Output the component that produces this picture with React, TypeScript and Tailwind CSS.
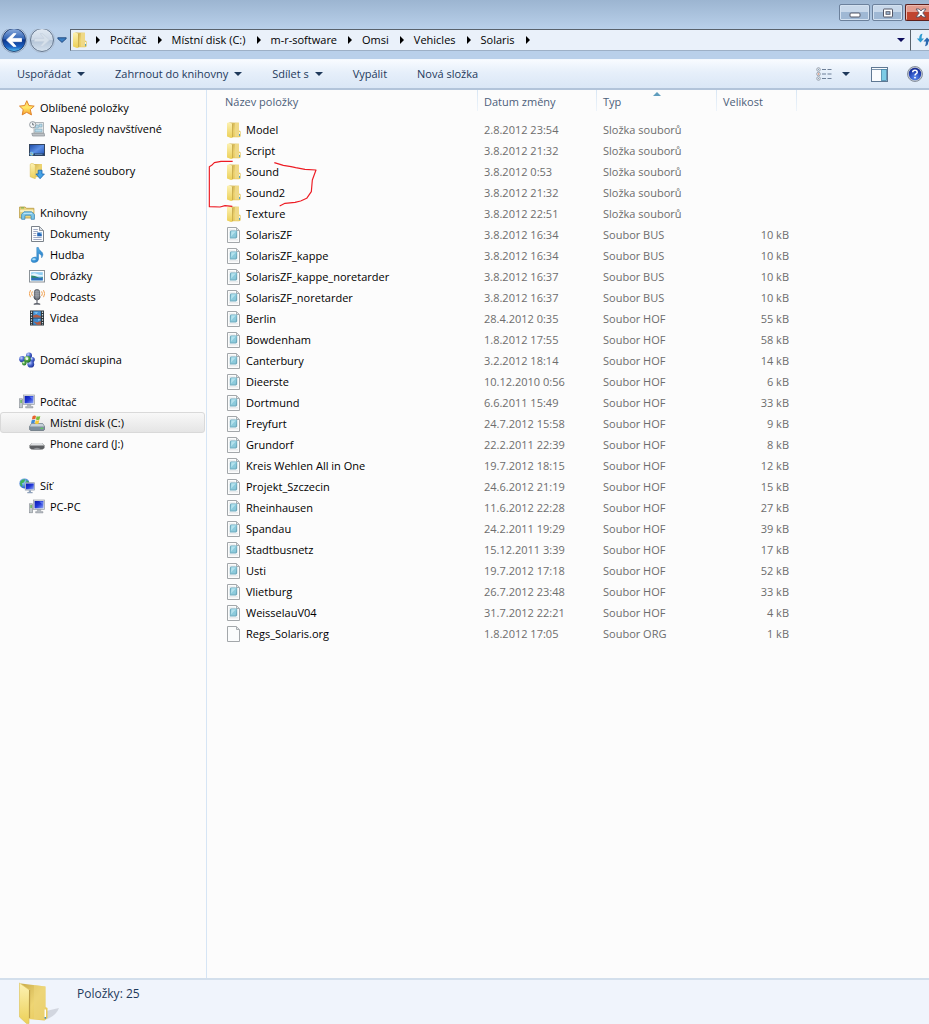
import type { ReactNode } from "react";

type FileRow = {
  name: string;
  date: string;
  type: string;
  size?: string;
};

const files: FileRow[] = [
  { name: "Model", date: "2.8.2012 23:54", type: "Složka souborů" },
  { name: "Script", date: "3.8.2012 21:32", type: "Složka souborů" },
  { name: "Sound", date: "3.8.2012 0:53", type: "Složka souborů" },
  { name: "Sound2", date: "3.8.2012 21:32", type: "Složka souborů" },
  { name: "Texture", date: "3.8.2012 22:51", type: "Složka souborů" },
  { name: "SolarisZF", date: "3.8.2012 16:34", type: "Soubor BUS", size: "10 kB" },
  { name: "SolarisZF_kappe", date: "3.8.2012 16:34", type: "Soubor BUS", size: "10 kB" },
  { name: "SolarisZF_kappe_noretarder", date: "3.8.2012 16:37", type: "Soubor BUS", size: "10 kB" },
  { name: "SolarisZF_noretarder", date: "3.8.2012 16:37", type: "Soubor BUS", size: "10 kB" },
  { name: "Berlin", date: "28.4.2012 0:35", type: "Soubor HOF", size: "55 kB" },
  { name: "Bowdenham", date: "1.8.2012 17:55", type: "Soubor HOF", size: "58 kB" },
  { name: "Canterbury", date: "3.2.2012 18:14", type: "Soubor HOF", size: "14 kB" },
  { name: "Dieerste", date: "10.12.2010 0:56", type: "Soubor HOF", size: "6 kB" },
  { name: "Dortmund", date: "6.6.2011 15:49", type: "Soubor HOF", size: "33 kB" },
  { name: "Freyfurt", date: "24.7.2012 15:58", type: "Soubor HOF", size: "9 kB" },
  { name: "Grundorf", date: "22.2.2011 22:39", type: "Soubor HOF", size: "8 kB" },
  { name: "Kreis Wehlen All in One", date: "19.7.2012 18:15", type: "Soubor HOF", size: "12 kB" },
  { name: "Projekt_Szczecin", date: "24.6.2012 21:19", type: "Soubor HOF", size: "15 kB" },
  { name: "Rheinhausen", date: "11.6.2012 22:28", type: "Soubor HOF", size: "27 kB" },
  { name: "Spandau", date: "24.2.2011 19:29", type: "Soubor HOF", size: "39 kB" },
  { name: "Stadtbusnetz", date: "15.12.2011 3:39", type: "Soubor HOF", size: "17 kB" },
  { name: "Usti", date: "19.7.2012 17:18", type: "Soubor HOF", size: "52 kB" },
  { name: "Vlietburg", date: "26.7.2012 23:48", type: "Soubor HOF", size: "33 kB" },
  { name: "WeisselauV04", date: "31.7.2012 22:21", type: "Soubor HOF", size: "4 kB" },
  { name: "Regs_Solaris.org", date: "1.8.2012 17:05", type: "Soubor ORG", size: "1 kB" },
];

const crumbs = ["Počítač", "Místní disk (C:)", "m-r-software", "Omsi", "Vehicles", "Solaris"];

const commands = [
  { label: "Uspořádat", menu: true },
  { label: "Zahrnout do knihovny", menu: true },
  { label: "Sdílet s", menu: true },
  { label: "Vypálit", menu: false },
  { label: "Nová složka", menu: false },
];

/* ── Icons ── */

function Icon({ children }: { children: ReactNode }) {
  return (
    <svg viewBox="0 0 16 16" className="size-4 shrink-0" aria-hidden="true">
      {children}
    </svg>
  );
}

// Gradients shared by every icon on the page
function IconDefs() {
  return (
    <svg className="absolute size-0" aria-hidden="true">
      <defs>
        <linearGradient id="folderFront" x1="0" y1="0" x2="0" y2="1">
          <stop offset="0" stopColor="#fdf2b4" />
          <stop offset="1" stopColor="#ecd058" />
        </linearGradient>
        <linearGradient id="folderBack" x1="0" y1="0" x2="1" y2="1">
          <stop offset="0" stopColor="#c9ab4c" />
          <stop offset="0.5" stopColor="#eed573" />
          <stop offset="1" stopColor="#e5c552" />
        </linearGradient>
        <linearGradient id="star" x1="0" y1="0" x2="0" y2="1">
          <stop offset="0" stopColor="#ffd36a" />
          <stop offset="0.5" stopColor="#ffe766" />
          <stop offset="1" stopColor="#f79c2c" />
        </linearGradient>
        <linearGradient id="screen" x1="0" y1="0" x2="1" y2="1">
          <stop offset="0" stopColor="#0b1cae" />
          <stop offset="0.5" stopColor="#2238d8" />
          <stop offset="1" stopColor="#8fa8f5" />
        </linearGradient>
        <linearGradient id="desktop" x1="0" y1="0" x2="1" y2="1">
          <stop offset="0" stopColor="#1c4aa5" />
          <stop offset="0.5" stopColor="#5d8fe4" />
          <stop offset="1" stopColor="#1c4fb5" />
        </linearGradient>
        <linearGradient id="note" x1="0" y1="0" x2="1" y2="1">
          <stop offset="0" stopColor="#6cc3f2" />
          <stop offset="1" stopColor="#1670c0" />
        </linearGradient>
        <radialGradient id="globe" cx="0.4" cy="0.35" r="0.7">
          <stop offset="0" stopColor="#9fd9ff" />
          <stop offset="1" stopColor="#1b55c4" />
        </radialGradient>
        <radialGradient id="ballBlue" cx="0.35" cy="0.3" r="0.75">
          <stop offset="0" stopColor="#c4d4ff" />
          <stop offset="0.5" stopColor="#4a66cf" />
          <stop offset="1" stopColor="#1c2f91" />
        </radialGradient>
        <radialGradient id="ballGreen" cx="0.35" cy="0.3" r="0.75">
          <stop offset="0" stopColor="#e1f8d4" />
          <stop offset="0.5" stopColor="#52a846" />
          <stop offset="1" stopColor="#1f6c2b" />
        </radialGradient>
        <linearGradient id="backBall" x1="0" y1="0" x2="0" y2="1">
          <stop offset="0" stopColor="#8faedc" />
          <stop offset="0.45" stopColor="#2f62b5" />
          <stop offset="0.5" stopColor="#0b358b" />
          <stop offset="0.8" stopColor="#1c63c4" />
          <stop offset="1" stopColor="#5cc9f5" />
        </linearGradient>
        <linearGradient id="forwardBall" x1="0" y1="0" x2="0" y2="1">
          <stop offset="0" stopColor="#e2eaf3" />
          <stop offset="0.48" stopColor="#ccd8e6" />
          <stop offset="0.52" stopColor="#b4c5d8" />
          <stop offset="1" stopColor="#d7e3ef" />
        </linearGradient>
        <radialGradient id="helpBall" cx="0.5" cy="0.8" r="0.8">
          <stop offset="0" stopColor="#5a8af0" />
          <stop offset="0.6" stopColor="#2546b8" />
          <stop offset="1" stopColor="#16288a" />
        </radialGradient>
      </defs>
    </svg>
  );
}

function FolderIcon() {
  return (
    <Icon>
      <path d="M3.2 .6 13 .8V8.4L14.4 9.1V14.4L13.2 15.2H3.5Z" fill="url(#folderBack)" />
      <path d="M9 .8H13V14.6H9Z" fill="#efd987" />
      <path d="M1 .9 3 .2 6.4 1.8V15.4L5.2 15.9 1 14.5Z" fill="url(#folderFront)" />
      <path d="M6.4 1.9 7.1 1.7V15.2H6.4Z" fill="#b7963a" />
      <path d="M13 9.4H14.4V14.2L13.2 14.9Z" fill="#dfc25a" />
      <path d="M13.5 10V12" stroke="#fff" strokeWidth="0.8" />
      <path d="M13.5 12V13.8" stroke="#4aa0c8" strokeWidth="1" />
    </Icon>
  );
}

function FileIcon({ blank = false }: { blank?: boolean }) {
  return (
    <Icon>
      <path d="M1.5.5H10.5L13.5 3.5V15.5H1.5Z" fill="#fbfcfc" stroke="#a3a7aa" />
      <path d="M10.5.8V3.5H13.2" fill="#e4e7e9" stroke="#a3a7aa" strokeWidth="0.9" />
      {!blank && (
        <>
          <path d="M3 3H9M3 12.8H12" stroke="#d9dddf" strokeWidth="0.8" />
          <path d="M4.8 3.6H11.2V10.4L10 11.6H3.8V4.8Z" fill="#6fa9bd" />
          <path d="M5.2 4H10.6L9.7 10.4H4.4Z" fill="#8ccbdc" />
          <path d="M5.4 4.4H9.8L5 9.4Z" fill="#b4e2ed" />
        </>
      )}
    </Icon>
  );
}

function StarIcon() {
  return (
    <Icon>
      <path
        d="M7.8.7 9.9 5.5 15.2 6.1 11.3 9.6 12.5 14.9 7.7 12.3 3.2 14.9 4.2 9.6.5 6.1 5.7 5.5Z"
        fill="url(#star)"
        stroke="#dd7c22"
        strokeLinejoin="round"
        strokeWidth="0.9"
      />
    </Icon>
  );
}

function RecentIcon() {
  return (
    <Icon>
      <path d="M5 1.5H14.5V12H5Z" fill="#e7eaec" stroke="#9da3a8" strokeWidth="0.8" />
      <path d="M2.8 12.3H15.2L15.6 15H3.6Z" fill="#bcc1c5" stroke="#888e94" strokeWidth="0.7" />
      <path d="M6.2 4H9.3V7H6.2ZM10.3 3.2H13V6H10.3ZM6 8.2H13V10.8H6Z" fill="#b9dcec" stroke="#79a3b7" strokeWidth="0.6" />
      <circle cx="3.7" cy="3.7" r="3.1" fill="#f4f6f8" stroke="#8d949b" strokeWidth="0.9" />
      <path d="M3.7 1.8V3.9H5.2" fill="none" stroke="#4a535c" strokeWidth="0.8" />
    </Icon>
  );
}

function DesktopIcon() {
  return (
    <Icon>
      <rect x="0.5" y="2.5" width="15" height="11" fill="url(#desktop)" stroke="#34455f" />
      <path d="M1 11.3H15V13.2H1Z" fill="#24426f" />
      <path d="M6 12.3H13.5" stroke="#7ca9d8" strokeWidth="0.8" />
      <circle cx="2.6" cy="11.8" r="2" fill="#74c6ef" />
      <path d="M1.6 11.7H2.5V10.8H1.9Z" fill="#f0653a" />
      <path d="M2.8 12.2H3.8V13H2.8Z" fill="#f7d54a" />
    </Icon>
  );
}

function DownloadsIcon() {
  return (
    <Icon>
      <path d="M3.4.9 13 1.1V13.5L3.4 14.8Z" fill="url(#folderBack)" />
      <path d="M1.2 1.3 3-.1 6.3 2V15.8L1.2 13.8Z" fill="url(#folderFront)" stroke="#d6b84e" strokeWidth="0.5" />
      <path d="M9.2 7.2H13V11H15.4L11.1 15.7 6.9 11H9.2Z" fill="#45a2e6" stroke="#1864b0" strokeWidth="0.8" />
    </Icon>
  );
}

function LibrariesIcon() {
  return (
    <Icon>
      <path d="M.6 2H6.2L7.4 3.3H14.9V13H.6Z" fill="#e9d27b" stroke="#b8983f" strokeWidth="0.8" />
      <path d="M1.2 4.8H14.4V7H1.2Z" fill="#f9efbd" />
      <path d="M2 2.9H5" stroke="#63ad4b" strokeWidth="0.9" />
      <path d="M5 6.8H12.7L15.4 9.6V14.3H12.1V11.2Q12.1 10.2 11.1 10.2H6.9Q5.9 10.2 5.9 11.2V14.3H2.6V9.3Z" fill="#7ec6e8" stroke="#3b88b8" strokeWidth="0.8" />
      <path d="M4.5 8.4H13.2" stroke="#c6ebf9" strokeWidth="0.9" />
    </Icon>
  );
}

function DocumentsIcon() {
  return (
    <Icon>
      <path d="M2.5.5H10.5L14.5 4.5V15.5H2.5Z" fill="#fcfdfe" stroke="#7b828a" />
      <path d="M10.5.8V4.5H14.2" fill="#dfe4ea" stroke="#7b828a" strokeWidth="0.8" />
      <path d="M4.3 3.5H8.8M4.3 5.5H8.8M4.3 7.5H7.3M4.3 9.5H7.3M4.3 11.5H12.7M4.3 13.5H12.7" stroke="#8794b5" strokeWidth="0.8" />
      <path d="M8.2 6.5H12.8V10.3H8.2Z" fill="#2668b8" />
      <path d="M10.3 6.5H12.8V8.5Z" fill="#9fd0f4" />
    </Icon>
  );
}

function MusicIcon() {
  return (
    <Icon>
      <path
        d="M7.8.5H9.4Q9.6 2.6 12 4.3 15.4 6.8 12.6 10.8 13.4 7.5 9.5 6.2V12.2Q9.2 15.2 5.4 15.5 2 15.5 2.1 13 2.6 10.3 6 10.1 7.2 10 7.8 10.4Z"
        fill="url(#note)"
        stroke="#2277bb"
        strokeWidth="0.5"
      />
      <ellipse cx="5" cy="12.3" rx="1.8" ry="1" fill="#a9defa" />
    </Icon>
  );
}

function PicturesIcon() {
  return (
    <Icon>
      <rect x="0.5" y="2.5" width="15" height="11.5" fill="#fbfcfd" stroke="#8b9298" />
      <rect x="2.2" y="4.2" width="11.6" height="8.2" fill="#8ecdf2" />
      <path d="M2.2 6.4Q5 4.5 8 6T13.8 6.8V8.5H2.2Z" fill="#e6f5fc" />
      <path d="M2.2 7.5Q6 7.4 8.4 9T13.8 9V10H2.2Z" fill="#2d8a6c" />
      <path d="M2.2 9.8H13.8V12.4H2.2Z" fill="#2f6fb8" />
    </Icon>
  );
}

function PodcastsIcon() {
  return (
    <Icon>
      <rect x="5.4" y="0.6" width="5.2" height="9.6" rx="2.2" fill="#70757e" stroke="#444850" strokeWidth="0.7" />
      <path d="M5.6 2.8H10.4M5.6 4.8H10.4M5.6 6.8H10.4M7.2 1V9.5M9 1V9.5" stroke="#b8bdc6" strokeWidth="0.5" />
      <path d="M4.8 7.5Q5 11 8 11T11.2 7.5M8 11V14.5" fill="none" stroke="#545963" strokeWidth="1" />
      <path d="M4.8 15.2Q8 13.4 11.2 15.2Z" fill="#686d78" stroke="#4f545e" strokeWidth="0.7" />
      <path d="M3.4 2.4Q1.8 4.6 3.4 6.9M1.5 1.2Q-.9 4.6 1.5 8.2M12.6 2.4Q14.2 4.6 12.6 6.9M14.5 1.2Q16.9 4.6 14.5 8.2" fill="none" stroke="#f0a050" strokeWidth="1" />
    </Icon>
  );
}

function VideosIcon() {
  return (
    <Icon>
      <rect x="1" y="0.5" width="14" height="15" fill="#2c343a" />
      <rect x="4.2" y="1.2" width="7.6" height="6.4" fill="#4793d8" />
      <rect x="4.2" y="8.4" width="7.6" height="6.4" fill="#3e8ad0" />
      <path d="M4.2 5.6 7.5 4.4 11.8 6.2V7.6H4.2ZM4.2 11.2 8 12.5 11.8 11V14.8H8Z" fill="#b35c42" />
      <path d="M5 2.4 9 2 7.4 4ZM9 9 11.5 9.4 9.5 11Z" fill="#85cdf5" />
      <path d="M2.5 1.5V15M13.5 1.5V15" stroke="#cfdde0" strokeWidth="1.2" strokeDasharray="1.4 1.2" />
    </Icon>
  );
}

function HomegroupIcon() {
  return (
    <Icon>
      <circle cx="10" cy="3.4" r="3" fill="url(#ballBlue)" />
      <circle cx="3.3" cy="7.2" r="3.1" fill="url(#ballBlue)" />
      <circle cx="13.2" cy="7.6" r="2.6" fill="url(#ballBlue)" />
      <circle cx="11.8" cy="12.2" r="3.4" fill="url(#ballBlue)" />
      <circle cx="5.2" cy="11.2" r="2.2" fill="url(#ballGreen)" />
      <circle cx="8.4" cy="7.4" r="3.3" fill="url(#ballGreen)" />
      <circle cx="8" cy="6.8" r="1.3" fill="#effbea" />
    </Icon>
  );
}

function ComputerIcon() {
  return (
    <Icon>
      <rect x="4.5" y="1" width="11" height="9.5" fill="#dfe3e6" stroke="#979da5" strokeWidth="0.7" />
      <rect x="5.6" y="2" width="8.8" height="7.3" fill="url(#screen)" />
      <path d="M10.3 2.4H14V6Z" fill="#5d77ed" />
      <path d="M8.4 10.6H11.8V12.6H14V14H6.6V12.6H8.4Z" fill="#b5bbc1" stroke="#858b93" strokeWidth="0.4" />
      <rect x="0.6" y="4.8" width="3" height="9" fill="#c3c9cd" stroke="#81888f" strokeWidth="0.6" />
      <path d="M2.1 6V9" stroke="#4fb43c" strokeWidth="1.2" />
    </Icon>
  );
}

function SystemDriveIcon() {
  return (
    <Icon>
      <path d="M2.5 8.5H13.6L15.6 11.5V14.5L14.6 15.5H1.6L.6 14.5V11.5Z" fill="#7e8f9d" stroke="#505f6c" strokeWidth="0.6" />
      <path d="M2.5 8.7H13.6L15.3 11.4H.9Z" fill="#c6d1d9" />
      <path d="M11.5 13.3H14" stroke="#52e04a" strokeWidth="1" />
      <path d="M3.6 1.2Q5.4.1 7 1L6.3 4.3Q4.6 3.5 2.9 4.6Z" fill="#e8632c" />
      <path d="M7.6 1.3Q9.3 2 11.3 1L10.5 4.4Q8.5 5.4 6.9 4.6Z" fill="#7abf3a" />
      <path d="M2.7 5.2Q4.5 4.2 6.1 5L5.4 8.3Q3.8 7.5 2 8.5Z" fill="#3f8ad6" />
      <path d="M6.7 5.3Q8.4 6.1 10.3 5.1L9.6 8.4Q7.7 9.5 6 8.6Z" fill="#f6c933" />
    </Icon>
  );
}

function CardDriveIcon() {
  return (
    <Icon>
      <path d="M3 7H13L15.5 9.5V12L13.5 13.5H2.5L.5 12V9.5Z" fill="#5c5e61" />
      <path d="M3 7H13L15.2 9.5H.8Z" fill="#dfe1e3" />
      <path d="M3.6 13.5Q8 9.8 12.4 13.5Z" fill="#929599" />
    </Icon>
  );
}

function NetworkIcon() {
  return (
    <Icon>
      <circle cx="5.4" cy="5.4" r="5" fill="url(#globe)" />
      <path d="M1.5 3Q4.5.4 6.3 1.6L5 4.4 2.8 5.3 3.6 7.5 2.2 8.4Q.2 6 1.5 3ZM7.3 2.2 9.5 3.4 9.6 5 7.2 4.7Z" fill="#3fb257" />
      <rect x="6.2" y="4.7" width="9.4" height="7.4" fill="#d8dfe8" stroke="#8993a2" strokeWidth="0.6" />
      <rect x="7" y="5.5" width="7.8" height="5.8" fill="url(#screen)" />
      <path d="M9.8 12.2H12V14H13.6V15.2H8.3V14H9.8Z" fill="#8ea1ba" />
    </Icon>
  );
}

function LargeFolderIcon() {
  return (
    <svg viewBox="0 0 42 46" className="h-[46px] w-[42px] shrink-0" aria-hidden="true">
      <path d="M28 31 41 28Q38 36 27 40Z" fill="#8d929b" opacity="0.3" />
      <path d="M3 3.5 27.5 6.5V27L29.5 28V38L26.5 40.5 10 39Z" fill="url(#folderBack)" />
      <path d="M16 5 27.5 6.5V40L16 39Z" fill="#edd67c" opacity="0.6" />
      <path d="M1.5 3 1.5 37 8.5 43.5H11V32L11.5 10Z" fill="url(#folderFront)" stroke="#e0c763" strokeWidth="0.7" />
      <path d="M11.6 10V38" stroke="#a98c3c" strokeWidth="0.8" />
      <path d="M27.3 29.5V37.5" stroke="#fff" strokeWidth="1.5" />
      <circle cx="27.3" cy="37.8" r="0.9" fill="#318ac5" />
    </svg>
  );
}

function DownArrow({ className = "text-[#1e395b]" }: { className?: string }) {
  return (
    <svg viewBox="0 0 8 4" className={`h-1 w-2 shrink-0 ${className}`} aria-hidden="true">
      <path d="M0 0H8L4 4Z" fill="currentColor" />
    </svg>
  );
}

function RightArrow() {
  return (
    <svg viewBox="0 0 4 8" className="h-2 w-1 shrink-0" aria-hidden="true">
      <path d="M0 0 4 4 0 8Z" fill="#000" />
    </svg>
  );
}

/* ── Navigation pane ── */

type Place = { label: string; icon: () => ReactNode; selected?: boolean };
type PlaceGroup = Place & { items: Place[] };

const places: PlaceGroup[] = [
  {
    label: "Oblíbené položky",
    icon: StarIcon,
    items: [
      { label: "Naposledy navštívené", icon: RecentIcon },
      { label: "Plocha", icon: DesktopIcon },
      { label: "Stažené soubory", icon: DownloadsIcon },
    ],
  },
  {
    label: "Knihovny",
    icon: LibrariesIcon,
    items: [
      { label: "Dokumenty", icon: DocumentsIcon },
      { label: "Hudba", icon: MusicIcon },
      { label: "Obrázky", icon: PicturesIcon },
      { label: "Podcasts", icon: PodcastsIcon },
      { label: "Videa", icon: VideosIcon },
    ],
  },
  { label: "Domácí skupina", icon: HomegroupIcon, items: [] },
  {
    label: "Počítač",
    icon: ComputerIcon,
    items: [
      { label: "Místní disk (C:)", icon: SystemDriveIcon, selected: true },
      { label: "Phone card (J:)", icon: CardDriveIcon },
    ],
  },
  {
    label: "Síť",
    icon: NetworkIcon,
    items: [{ label: "PC-PC", icon: ComputerIcon }],
  },
];

function NavigationPane() {
  return (
    <nav className="flex w-[207px] shrink-0 flex-col gap-[21px] border-r border-[#d6e5f5] pt-[7px] pr-px text-black">
      {places.map((group) => (
        <ul key={group.label}>
          <li>
            <a href="#" className="flex h-[21px] items-center gap-[5px] pl-[19px]">
              <group.icon />
              {group.label}
            </a>
          </li>
          {group.items.map((item) => (
            <li key={item.label}>
              <a
                href="#"
                className={`flex h-[21px] items-center gap-[5px] rounded-[3px] border pl-7 ${
                  item.selected
                    ? "border-[#d9d9d9] bg-linear-to-b from-[#f8f8f8] to-[#e5e5e5]"
                    : "border-transparent"
                }`}
              >
                <item.icon />
                {item.label}
              </a>
            </li>
          ))}
        </ul>
      ))}
    </nav>
  );
}

/* ── Window frame ── */

function TitleBar() {
  return (
    <header className="flex h-[29px] items-start justify-end gap-0.5 overflow-hidden pt-1">
      <button
        aria-label="Minimalizovat"
        className="grid h-[17px] w-[31px] place-items-center rounded-[2px] border border-[#6c819c] bg-linear-to-b from-[#c8d8ea] from-45% to-[#9fb8d4] to-50% shadow-[inset_0_0_0_1px_#d3e1f0]"
      >
        <svg viewBox="0 0 12 10" className="h-2.5 w-3">
          <rect x="1" y="5" width="10" height="4" rx="1" fill="#fff" stroke="#535666" />
        </svg>
      </button>
      <button
        aria-label="Maximalizovat"
        className="grid h-[17px] w-[31px] place-items-center rounded-[2px] border border-[#6c819c] bg-linear-to-b from-[#c8d8ea] from-45% to-[#9fb8d4] to-50% shadow-[inset_0_0_0_1px_#d3e1f0]"
      >
        <svg viewBox="0 0 12 10" className="h-2.5 w-3">
          <rect x="1.5" y="1" width="9" height="8" rx="0.5" fill="#fff" stroke="#535666" />
          <rect x="4" y="3.7" width="4" height="2.6" fill="#9fb8d4" stroke="#535666" strokeWidth="0.9" />
        </svg>
      </button>
      <button
        aria-label="Zavřít"
        className="flex h-[17px] w-6 items-center justify-end rounded-l-[2px] border border-r-0 border-[#5c1f1c] bg-linear-to-b from-[#e29c8f] from-45% to-[#c0452f] to-50% pr-0.5 shadow-[inset_1px_1px_0_#ecb9af]"
      >
        <svg viewBox="0 0 12 10" className="h-2.5 w-3">
          <path
            d="M1 1H4.2L6 3 7.8 1H11L7.8 5 11 9H7.8L6 7 4.2 9H1L4.2 5Z"
            fill="#fff"
            stroke="#535666"
            strokeWidth="0.9"
          />
        </svg>
      </button>
    </header>
  );
}

function AddressBar() {
  return (
    <div className="flex h-[30px] items-start overflow-hidden">
      <div className="flex w-[70px] shrink-0 items-center">
        <button aria-label="Zpět" className="-mt-[3px]">
          <svg viewBox="0 0 28 28" className="size-7">
            <circle cx="14" cy="14" r="12.8" fill="#d9e6f4" stroke="#7f96b4" strokeWidth="0.8" />
            <circle cx="14" cy="14" r="11.5" fill="url(#backBall)" stroke="#1b3768" strokeWidth="0.9" />
            <path d="M6.5 14 13.3 7.6H16L12 12.4H21.5V15.6H12L16 20.4H13.3Z" fill="#fff" stroke="#fff" strokeLinejoin="round" strokeWidth="0.8" />
          </svg>
        </button>
        <button aria-label="Vpřed" className="-mt-[3px]">
          <svg viewBox="0 0 28 28" className="size-7">
            <circle cx="14" cy="14" r="12.8" fill="#c8d8ea" stroke="#a1b5cf" strokeWidth="0.6" />
            <circle cx="14" cy="14" r="11.5" fill="url(#forwardBall)" stroke="#64778f" strokeWidth="1" />
            <path d="M21.5 14 14.7 7.6H12L16 12.4H6.5V15.6H16L12 20.4H14.7Z" fill="#d6e0ea" stroke="#c5d1df" strokeLinejoin="round" strokeWidth="0.7" />
          </svg>
        </button>
        <button aria-label="Poslední stránky" className="-mt-[3px] pl-px">
          <svg viewBox="0 0 10 6" className="h-1.5 w-2.5">
            <path d="M.8.8H9.2V1.6L5 5.4.8 1.6Z" fill="#3b7fc4" stroke="#1d4479" strokeWidth="0.9" />
          </svg>
        </button>
      </div>
      <div className="flex h-[22px] min-w-0 flex-1 items-center border-x border-t border-b border-[#59626c] border-b-[#9db0c6] bg-[#eaf1fa] text-black">
        <span className="mr-2 ml-px flex">
          <FolderIcon />
        </span>
        <RightArrow />
        {crumbs.map((crumb) => (
          <span key={crumb} className="flex items-center">
            <button className="pr-[11px] pl-2.5">{crumb}</button>
            <RightArrow />
          </span>
        ))}
        <button aria-label="Předchozí umístění" className="ml-auto pr-[5px]">
          <DownArrow className="text-[#0c0c5c]" />
        </button>
      </div>
      <button
        aria-label="Aktualizovat"
        className="flex h-[22px] w-[18px] shrink-0 items-center overflow-hidden border-t border-b border-t-[#59626c] border-b-[#9db0c6] bg-[#eaf1fa] pl-[5px]"
      >
        <svg viewBox="0 0 16 14" className="h-3.5 w-4 shrink-0">
          <path d="M6.5.8Q3.2 1 3.2 5.5H.8L4.5 9.6 8 5.5H5.6Q5.5 3 6.5.8Z" fill="#2f9bd0" />
          <path d="M9 13.2Q12.3 13 12.3 8.5H14.7L11 4.4 7.5 8.5H9.9Q10 11 9 13.2Z" fill="#2a68b0" />
        </svg>
      </button>
    </div>
  );
}

function CommandBar() {
  return (
    <div className="flex h-[31px] items-center border-t border-b-2 border-t-[#f4f9fe] border-b-[#b2c4da] bg-linear-to-b from-[#f8fbff] via-[#e6effa] via-45% to-[#dae7f6] pr-1.5 pl-[17px] text-[#1e395b]">
      <div className="flex flex-1 items-center gap-[30px]">
        {commands.map((command) => (
          <button key={command.label} className="flex items-center gap-1.5">
            {command.label}
            {command.menu && <DownArrow />}
          </button>
        ))}
      </div>
      <div className="flex items-center">
        <button aria-label="Změnit zobrazení" className="flex items-center gap-2.5">
          <svg viewBox="0 0 16 14" className="h-3.5 w-4">
            {[2.5, 7, 11.5].map((y) => (
              <g key={y}>
                <circle cx="2.5" cy={y} r="1.8" fill="#eef1f4" stroke="#8a93a0" strokeWidth="0.8" />
                <circle cx="2.5" cy={y} r="0.7" fill={y === 7 ? "#df8064" : "#8ea5bc"} />
                <path d={`M6 ${y}H10M11.5 ${y}H15.5`} stroke="#6d7f97" strokeWidth="1.1" />
              </g>
            ))}
          </svg>
          <DownArrow />
        </button>
        <button aria-label="Zobrazit podokno náhledu" className="ml-[21px]">
          <svg viewBox="0 0 17 15" className="h-[15px] w-[17px]">
            <rect x="0.5" y="0.5" width="16" height="14" fill="#fafcfe" stroke="#5f7893" />
            <path d="M1 2.5H16" stroke="#7d96b0" />
            <rect x="10.5" y="2.5" width="5" height="11" fill="#7dcbe5" stroke="#4685a8" strokeWidth="0.8" />
          </svg>
        </button>
        <button aria-label="Nápověda" className="ml-[19px]">
          <svg viewBox="0 0 16 16" className="size-4">
            <circle cx="8" cy="8" r="7.5" fill="#c5cbd5" stroke="#737d8c" strokeWidth="0.8" />
            <circle cx="8" cy="8" r="6.2" fill="url(#helpBall)" />
            <path d="M5.7 6.3Q5.8 4.3 8 4.3T10.2 6.2Q10.2 7.2 9 7.9 8 8.5 8 9.5" fill="none" stroke="#fff" strokeWidth="1.5" />
            <circle cx="8" cy="11.6" r="0.9" fill="#fff" />
          </svg>
        </button>
      </div>
    </div>
  );
}

/* ── File list ── */

const headClass =
  "relative p-0 pb-[5px] pl-1.5 text-left font-normal after:absolute after:top-0 after:right-0 after:h-[21px] after:w-px after:bg-linear-to-b after:from-[#d8e6f4] after:to-[#eef4fa]";

function FileList() {
  return (
    <table className="w-[590px] table-fixed border-collapse whitespace-nowrap">
      <colgroup>
        <col className="w-[271px]" />
        <col className="w-[119px]" />
        <col className="w-[120px]" />
        <col className="w-20" />
      </colgroup>
      <thead>
        <tr className="h-[29px] text-[#4c607a]">
          <th className={`${headClass} pl-[18px]`}>Název položky</th>
          <th className={headClass}>Datum změny</th>
          <th className={headClass} aria-sort="ascending">
            Typ
            <svg viewBox="0 0 8 4" className="absolute top-0.5 left-1/2 h-1 w-2 -translate-x-1/2" aria-hidden="true">
              <path d="M0 4 4 0 8 4Z" fill="#5f9dbd" />
            </svg>
          </th>
          <th className={headClass}>Velikost</th>
        </tr>
      </thead>
      <tbody className="text-[#6d6d6d]">
        {files.map((file) => (
          <tr key={file.name} className="h-[21px]">
            <td className="p-0 pl-[19px] text-black">
              <div className="flex items-center gap-1">
                {file.size ? <FileIcon blank={file.type === "Soubor ORG"} /> : <FolderIcon />}
                {file.name}
              </div>
            </td>
            <td className="p-0 pl-1.5">{file.date}</td>
            <td className="p-0 pl-1.5">{file.type}</td>
            <td className="p-0 pr-2 text-right">{file.size}</td>
          </tr>
        ))}
      </tbody>
    </table>
  );
}

// Hand-drawn red outline around the two sound folders
function RedMarker() {
  return (
    <svg
      viewBox="6 210 330 144"
      className="pointer-events-none absolute top-[70px] left-0 h-12 w-[110px]"
      aria-hidden="true"
    >
      <g fill="none" stroke="#ed1c24" strokeWidth="3.5" strokeLinejoin="round">
        <path d="M83 214H48L28 218 20 226 13 230V350L45 351 60 347 82 349" />
        <path d="M208 218 235 226 258 230 272 233 300 238 333 240 322 270 319 305 305 325 287 333 270 337 240 340 224 348" />
      </g>
    </svg>
  );
}

export default function App() {
  return (
    <div className="flex min-h-screen flex-col overflow-hidden bg-[#b9cfe9] bg-linear-to-b from-[#9cb5d1] to-[#b9d0ea] to-[29px] font-['Open_Sans','Noto_Sans',sans-serif] text-[11px] leading-4">
      <IconDefs />
      <TitleBar />
      <AddressBar />
      <CommandBar />
      <div className="flex flex-1 bg-[#fcfcfc]">
        <NavigationPane />
        <main className="relative min-w-0 flex-1">
          <FileList />
          <RedMarker />
        </main>
      </div>
      <footer className="flex h-[46px] items-start overflow-hidden border-t-2 border-[#d3dfec] bg-[#f0f4fc] pl-[18px] text-xs text-[#1e395b]">
        <LargeFolderIcon />
        <p className="pt-1.5 pl-[17px]">Položky: 25</p>
      </footer>
    </div>
  );
}
